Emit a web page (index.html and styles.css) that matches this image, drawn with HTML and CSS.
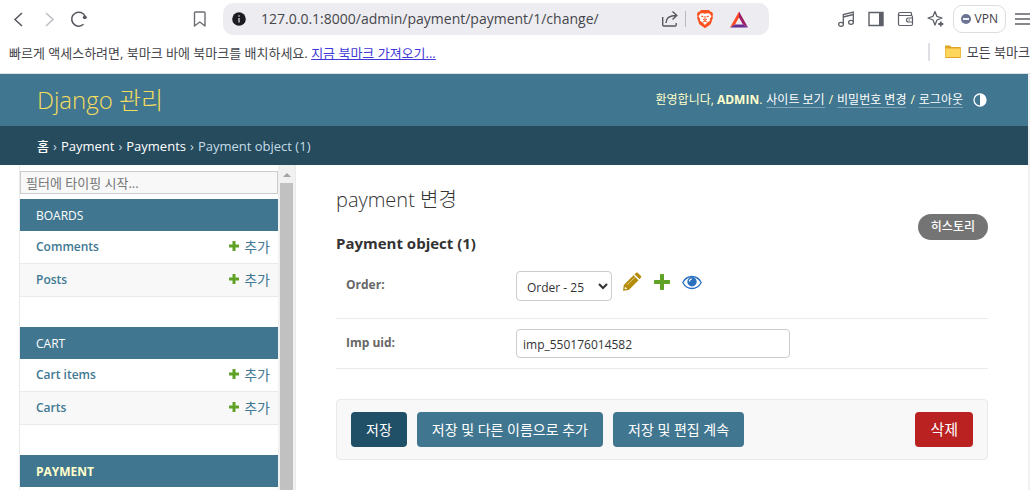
FILE: index.html
```html
<!DOCTYPE html>
<html lang="ko">
<head>
    <meta charset="UTF-8">
    <meta name="viewport" content="width=device-width, initial-scale=1">
    <title>payment 변경 | Django 관리</title>
    <link rel="stylesheet" href="styles.css">
</head>
<body>

<!-- browser toolbar -->
<div class="toolbar">
    <div class="nav-buttons">
        <button type="button" class="icon-btn" aria-label="뒤로">
            <svg width="20" height="20" viewBox="0 0 20 20" fill="none" stroke="#55585e" stroke-width="1.5"><path d="M13 4l-7 6.500 7 6.500"/></svg>
        </button>
        <button type="button" class="icon-btn" aria-label="앞으로">
            <svg width="20" height="20" viewBox="0 0 20 20" fill="none" stroke="#bdbec2" stroke-width="1.500"><path d="M7 4l7 6.500-7 6.500"/></svg>
        </button>
        <button type="button" class="icon-btn" aria-label="새로고침">
            <svg width="20" height="20" viewBox="0 0 20 20" fill="none" stroke="#55585e" stroke-width="1.500"><path d="M14.500 15.300A7 7 0 1 1 16.200 7.500"/><circle cx="15.800" cy="8.300" r="1.900" fill="#55585e" stroke="none"/></svg>
        </button>
    </div>
    <button type="button" class="icon-btn" aria-label="북마크">
        <svg width="20" height="20" viewBox="0 0 20 20" fill="none" stroke="#6b6d74" stroke-width="1.400" stroke-linejoin="round"><path d="M5.500 3h8.500q1 0 1 1v13l-5.200-4-5.300 4V4q0-1 1-1z"/></svg>
    </button>
    <div class="address">
        <svg width="14" height="14" viewBox="0 0 14 14"><circle cx="7" cy="7" r="6.800" fill="#1d1b22"/><path d="M7 6v4.500M7 3.300v1.500" stroke="#d8d8dc" stroke-width="1.300"/></svg>
        <input class="url" type="text" aria-label="주소" value="127.0.0.1:8000/admin/payment/payment/1/change/">
        <svg width="18" height="18" viewBox="0 0 18 18" fill="none" stroke="#55585e" stroke-width="1.400"><path d="M1.700 7v8q0 1 1 1h11.500q1 0 1-1v-2M5 13c0-4.500 3-7.500 10.500-7.500M11.500 1.500l4.300 4-4.300 4"/></svg>
        <span class="address-sep"></span>
        <svg class="brave" width="18" height="20" viewBox="0 0 18 20"><path d="M5 1h8l1.600 1.700 1.500.2 1 2.600-.6 1.500.4 1.800-2.200 6.500L9 19.200l-5.700-3.900L1.100 8.800 1.500 7 .9 5.500l1-2.600 1.500-.2z" fill="#fb5320"/><path d="M4.500 4.500L7 4.200l2 .6 2-.6 2.500.3 2 2.800-1.700 2.600.4 1.600-2.800 2L9 16l-2.400-2.500-2.800-2 .4-1.600-1.700-2.600z" fill="#fff"/><path d="M5 7l2.500.8M13 7l-2.500.8M9 7v4M7 10l2 1.500 2-1.500M7 13l2-1 2 1" fill="none" stroke="#fb5320"/></svg>
        <svg width="18" height="17" viewBox="0 0 18 17"><path d="M9 .5L0 16.500l5-3 4-7z" fill="#ff4724"/><path d="M9 .5l9 16-5-3-4-7z" fill="#9e1f63"/><path d="M0 16.500h18l-5-3H5z" fill="#662d91"/></svg>
    </div>
    <div class="tools">
        <button type="button" class="icon-btn" aria-label="재생목록"><svg width="18" height="18" viewBox="0 0 18 18" fill="none" stroke="#5d6068" stroke-width="1.300"><path d="M6.300 14V4.500l10-2.500v9.800M6.300 7l10-2.500"/><ellipse cx="4" cy="14.300" rx="2.400" ry="2"/><ellipse cx="14" cy="12.300" rx="2.400" ry="2"/></svg></button>
        <button type="button" class="icon-btn" aria-label="사이드바"><svg width="18" height="18" viewBox="0 0 18 18"><path d="M2 2.500h14v13H2z" fill="none" stroke="#5d6068" stroke-width="1.400"/><path d="M12 2.500h4v13h-4z" fill="#5d6068"/></svg></button>
        <button type="button" class="icon-btn" aria-label="지갑"><svg width="18" height="18" viewBox="0 0 18 18" fill="none" stroke="#5d6068" stroke-width="1.200"><path d="M14.500 5.500V3.500q0-1-1-1H3q-1.500 0-1.500 1.500V14q0 1.500 1.500 1.500h11q1.500 0 1.500-1.500V7q0-1.500-1.500-1.500H3Q1.500 5.500 1.500 4M16 8h-4.500q-2 0-2 2t2 2H16M11.500 10h1.500"/></svg></button>
        <button type="button" class="icon-btn" aria-label="Leo AI"><svg width="18" height="18" viewBox="0 0 18 18" fill="none" stroke="#5d6068" stroke-width="1.300" stroke-linejoin="round"><path d="M8 1.500l1.800 4.800L15 8l-5 2-2 5-2-5-5-2 5-1.700z"/><path d="M13.800 11.500v5M11.300 14h5" stroke-width="1.800"/></svg></button>
        <button type="button" class="vpn"><svg width="10" height="10" viewBox="0 0 10 10"><circle cx="5" cy="5" r="5" fill="#6d7393"/><path d="M2 5h6" stroke="#fff" stroke-width="1.800"/></svg>VPN</button>
        <button type="button" class="icon-btn" aria-label="메뉴"><svg width="18" height="18" viewBox="0 0 18 18" stroke="#5d6068" stroke-width="1.500"><path d="M1 4h16M1 9h16M1 14h16"/></svg></button>
    </div>
</div>

<div class="bookmarks">
    <p>빠르게 액세스하려면, 북마크 바에 북마크를 배치하세요. <a href="#">지금 북마크 가져오기...</a></p>
    <button type="button" class="all-bookmarks">
        <svg width="16" height="14" viewBox="0 0 16 14"><path d="M0 1.500Q0 .5 1 .5h4l1.500 1.500H15q1 0 1 1V12q0 1-1 1H1q-1 0-1-1z" fill="#e0a526"/><path d="M.5 3.500h15V12H.5z" fill="#ffd65c"/></svg>
        모든 북마크
    </button>
</div>

<div class="page">
    <header class="header">
        <div class="site-name"><a href="#">Django 관리</a></div>
        <div class="user-tools">
            <span>환영합니다, <strong>ADMIN</strong>.</span>
            <a href="#">사이트 보기</a> / <a href="#">비밀번호 변경</a> / <a href="#">로그아웃</a>
            <button type="button" class="icon-btn theme-toggle" aria-label="테마 전환"><svg width="14" height="14" viewBox="0 0 14 14"><circle cx="7" cy="7" r="6" fill="none" stroke="#fff" stroke-width="1.300"/><path d="M7 1a6 6 0 0 1 0 12z" fill="#fff"/></svg></button>
        </div>
    </header>

    <nav class="breadcrumbs">
        <a href="#">홈</a> › <a href="#">Payment</a> › <a href="#">Payments</a> › <span>Payment object (1)</span>
    </nav>

    <div class="main">
        <nav class="sidebar">
            <div class="sidebar-list">
                <input class="nav-filter" type="search" placeholder="필터에 타이핑 시작..." aria-label="필터">
                <table class="module">
                    <caption><a href="#">BOARDS</a></caption>
                    <tr><th scope="row"><a href="#">Comments</a></th><td><a class="addlink" href="#"><svg width="12" height="12" viewBox="0 0 12 12"><path d="M4.500 0h3v3.500H11v3H7.500V10h-3V6.500H1v-3h3.500z"/></svg>추가</a></td></tr>
                    <tr><th scope="row"><a href="#">Posts</a></th><td><a class="addlink" href="#"><svg width="12" height="12" viewBox="0 0 12 12"><path d="M4.500 0h3v3.500H11v3H7.500V10h-3V6.500H1v-3h3.500z"/></svg>추가</a></td></tr>
                </table>
                <table class="module">
                    <caption><a href="#">CART</a></caption>
                    <tr><th scope="row"><a href="#">Cart items</a></th><td><a class="addlink" href="#"><svg width="12" height="12" viewBox="0 0 12 12"><path d="M4.500 0h3v3.500H11v3H7.500V10h-3V6.500H1v-3h3.500z"/></svg>추가</a></td></tr>
                    <tr><th scope="row"><a href="#">Carts</a></th><td><a class="addlink" href="#"><svg width="12" height="12" viewBox="0 0 12 12"><path d="M4.500 0h3v3.500H11v3H7.500V10h-3V6.500H1v-3h3.500z"/></svg>추가</a></td></tr>
                </table>
                <table class="module current-app">
                    <caption><a href="#">PAYMENT</a></caption>
                </table>
            </div>
            <div class="scrollbar">
                <span class="scroll-up"></span>
                <span class="scroll-thumb"></span>
            </div>
        </nav>

        <main class="content">
            <div class="content-head">
                <div>
                    <h1>payment 변경</h1>
                    <h2>Payment object (1)</h2>
                </div>
                <a class="historylink" href="#">히스토리</a>
            </div>
            <form>
                <div class="form-row">
                    <label for="id_order">Order:</label>
                    <div class="related">
                        <select id="id_order"><option>Order - 25</option></select>
                        <a href="#" aria-label="변경"><svg width="20" height="20" viewBox="0 0 20 20"><path d="M1 18.800l.8-5.800L11.500 3.300l5 5L6.800 18zM12.500 2.300l1.700-1.500q.8-.6 1.500 0l3.300 3.300q.6.700 0 1.500L17.500 7.300z" fill="#b48c08"/><path d="M5 13.200l7.800-7.800" stroke="#ecdcae" stroke-width=".8"/><path d="M3.200 14.800l2 2-2 .5-.6-.6z" fill="#fff"/></svg></a>
                        <a href="#" aria-label="추가"><svg width="20" height="20" viewBox="0 0 20 20"><path d="M8.800 2h2.400q.8 0 .8.800V8h5.200q.8 0 .8.800v2.400q0 .8-.8.800H12v5.200q0 .8-.8.800H8.800q-.8 0-.8-.8V12H2.800q-.8 0-.8-.8V8.800q0-.8.8-.8H8V2.800q0-.8.8-.8z" fill="#5fa225"/></svg></a>
                        <a href="#" aria-label="보기"><svg width="20" height="20" viewBox="0 0 20 20"><path d="M.8 10.500Q4 4.500 10 4.500t9.200 6Q16 16.500 10 16.500T.8 10.500z" fill="none" stroke="#2b70bf" stroke-width="1.300"/><circle cx="10" cy="9.700" r="4.700" fill="#2b70bf"/><path d="M7.500 9.500q0-2.500 2.500-2.500" fill="none" stroke="#fff" stroke-width="1.200"/></svg></a>
                    </div>
                </div>
                <div class="form-row">
                    <label for="id_imp_uid">Imp uid:</label>
                    <input class="text-field" type="text" id="id_imp_uid" value="imp_550176014582">
                </div>
                <div class="submit-row">
                    <button type="submit" class="default">저장</button>
                    <button type="submit">저장 및 다른 이름으로 추가</button>
                    <button type="submit">저장 및 편집 계속</button>
                    <a class="deletelink" href="#">삭제</a>
                </div>
            </form>
        </main>
    </div>
</div>

</body>
</html>
```
FILE: styles.css
```css
* {
    box-sizing: border-box;
}

body {
    margin: 0;
    height: 100vh;
    display: flex;
    flex-direction: column;
    overflow: hidden;
    background: #fff;
    color: #333;
    font: 13px/20px "Open Sans", "Noto Sans CJK KR", sans-serif;
}

a {
    color: #417893;
    text-decoration: none;
}

svg {
    display: block;
    flex: none;
}

button,
input,
select {
    font: inherit;
}

.icon-btn {
    padding: 0;
    border: 0;
    background: none;
}

/* BROWSER */

.toolbar {
    display: flex;
    align-items: center;
    flex: none;
    height: 38px;
    padding-left: 9px;
}

.nav-buttons {
    display: flex;
    gap: 10px;
    width: 181px;
}

.address {
    display: flex;
    align-items: center;
    flex: 1;
    height: 32px;
    margin: 0 68px 0 13px;
    padding: 0 21px 0 9px;
    border-radius: 10px;
    background: #ededf1;
}

.url {
    flex: 1;
    min-width: 0;
    margin-left: 13px;
    border: 0;
    background: none;
    color: #45464c;
    font-size: 14px;
}

.address-sep {
    width: 1px;
    height: 16px;
    margin: 0 10px 0 6px;
    background: #b9b9c0;
}

.brave {
    margin-right: 16px;
}

.tools {
    display: flex;
    align-items: center;
    gap: 12px;
    flex: none;
    margin-right: -2px;
}

.vpn {
    display: flex;
    align-items: center;
    gap: 4px;
    height: 28px;
    margin: 0 -4px;
    padding: 0 7px;
    border: 1px solid #dcdce2;
    border-radius: 9px;
    background: #fff;
    color: #3f4047;
    font-size: 12px;
}

.bookmarks {
    display: flex;
    justify-content: space-between;
    flex: none;
    height: 36px;
    padding: 5px 0 10px 9px;
    border-bottom: 1px solid #dfdfe5;
    color: #45464c;
    font-size: 13px;
    white-space: nowrap;
}

.bookmarks p {
    margin: 0;
}

.bookmarks a {
    color: #3f39d8;
    text-decoration: underline;
}

.all-bookmarks {
    display: flex;
    align-items: center;
    gap: 6px;
    height: 18px;
    padding: 0 0 0 15px;
    border: 0;
    border-left: 2px solid #dfdfe5;
    background: none;
    color: #3f4047;
}

/* HEADER */

.page {
    display: flex;
    flex-direction: column;
    flex: 1;
    min-height: 0;
    border-right: 2px solid #f1f1f1;
}

.header {
    display: flex;
    align-items: center;
    justify-content: space-between;
    flex: none;
    height: 52px;
    padding: 0 41px 0 37px;
    background: #417690;
    color: #ffc;
}

.site-name {
    font-size: 24px;
    font-weight: 300;
}

.site-name a {
    color: #f5dd5d;
}

.user-tools {
    display: flex;
    align-items: center;
    gap: 4px;
    font-size: 12px;
    line-height: 14px;
}

.user-tools a {
    border-bottom: 1px solid #7ba1b3;
    color: #fff;
}

.theme-toggle {
    margin-left: 6px;
}

.breadcrumbs {
    display: flex;
    gap: 4px;
    flex: none;
    height: 39px;
    padding: 10px 37px;
    background: #264b5d;
    color: #c4dce8;
}

.breadcrumbs a {
    color: #fff;
    font-weight: 500;
}

.main {
    display: flex;
    flex: 1;
    min-height: 0;
}

/* SIDEBAR */

.sidebar {
    display: flex;
    flex: none;
    width: 277px;
    margin-left: 19px;
    overflow: hidden;
    border-left: 1px solid #eaeaea;
    border-right: 1px solid #eaeaea;
}

.sidebar-list {
    flex: 1;
    padding-top: 6px;
}

.nav-filter {
    display: block;
    width: 100%;
    height: 23px;
    margin-bottom: 5px;
    padding: 0 5px;
    border: 1px solid #ccc;
    background: #f8f8f8;
    font-size: 13px;
    appearance: none;
}

.nav-filter::placeholder {
    color: #757575;
}

.module {
    width: 100%;
    margin-bottom: 30px;
    border-spacing: 0;
}

.module caption {
    padding: 7px 16px 5px;
    background: #417690;
    font-size: 12px;
    text-align: left;
}

.module caption a {
    color: #fff;
}

.current-app caption a {
    color: #ffc;
    font-weight: 700;
}

.module th,
.module td {
    height: 33px;
    padding: 0 8px 0 16px;
    border-bottom: 1px solid #eaeaea;
    font-size: 12px;
    font-weight: 600;
    text-align: left;
}

.module td {
    font-weight: 400;
}

.module tr:nth-child(even) {
    background: #f8f8f8;
}

.addlink {
    display: flex;
    align-items: center;
    justify-content: flex-end;
    gap: 4px;
    font-size: 14px;
}

.addlink svg {
    fill: #5fa225;
}

.scrollbar {
    display: flex;
    flex-direction: column;
    align-items: center;
    flex: none;
    width: 17px;
    background: #f1f1f1;
}

.scroll-up {
    margin: 8px 0 6px;
    border: 4px solid transparent;
    border-top: 0;
    border-bottom-color: #a3a3a3;
}

.scroll-thumb {
    flex: 1;
    width: 13px;
    background: #c1c1c1;
}

/* CONTENT */

.content {
    flex: 1;
    min-width: 0;
    padding: 20px 40px;
}

.content-head {
    display: flex;
    align-items: center;
    justify-content: space-between;
}

h1 {
    margin: 0 0 16px;
    font-size: 20px;
    font-weight: 300;
    line-height: 30px;
}

h2 {
    margin: 0 0 5px;
    font-size: 15px;
    font-weight: 700;
    line-height: 25px;
}

.historylink {
    margin-top: 8px;
    padding: 3px 13px;
    border-radius: 15px;
    background: #747474;
    color: #fff;
    font-size: 12px;
    font-weight: 500;
}

.form-row {
    display: flex;
    align-items: flex-start;
    padding: 10px;
    border-bottom: 1px solid #eaeaea;
}

.form-row label {
    width: 170px;
    color: #666;
    font-size: 12px;
    font-weight: 700;
    line-height: 28px;
}

.related {
    display: flex;
    gap: 10px;
    padding-bottom: 7px;
}

.related svg {
    margin-top: 1px;
}

.related select {
    width: 96px;
    height: 30px;
    padding: 2px 5px 0 6px;
    border: 1px solid #ccc;
    border-radius: 4px;
    background: #fff;
    color: #333;
    font-size: 12px;
}

.text-field {
    width: 274px;
    height: 29px;
    padding: 2px 6px 0;
    border: 1px solid #ccc;
    border-radius: 4px;
    color: #333;
    font-size: 12px;
}

.submit-row {
    display: flex;
    gap: 10px;
    margin-top: 30px;
    padding: 12px 14px;
    border: 1px solid #eaeaea;
    border-radius: 4px;
    background: #f8f8f8;
}

.submit-row button,
.deletelink {
    height: 35px;
    padding: 0 15px;
    border: 0;
    border-radius: 4px;
    background: #417690;
    color: #fff;
    font-size: 14px;
    line-height: 35px;
}

.submit-row .default {
    background: #205067;
}

.submit-row .deletelink {
    margin-left: auto;
    background: #ba2121;
    font-size: 15px;
}
```
